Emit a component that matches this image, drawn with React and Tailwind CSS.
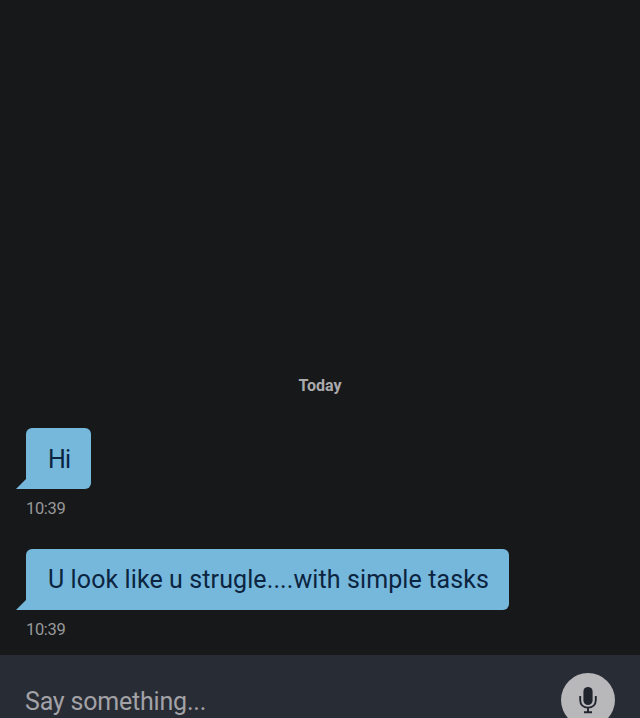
const messages = [
    { id: 1, text: 'Hi', time: '10:39', width: 'w-[65px]', tracking: 'tracking-[-0.8px]' },
    { id: 2, text: 'U look like u strugle....with simple tasks', time: '10:39', width: 'w-[483px]', tracking: 'tracking-[0.1px]' },
];

function Message({ message }) {
    return (
        <div className="h-[120.5px]">
            <div className={`relative flex h-[61px] items-center rounded-md rounded-bl-none bg-[#76b7dc] pl-[22px] ${message.width}`}>
                <svg className="absolute -left-[10px] bottom-0" width="11" height="10" viewBox="0 0 11 10">
                    <path d="M11 0H10L0 10H11Z" fill="#76b7dc" />
                </svg>
                <span className={`whitespace-nowrap pt-px text-[25px] leading-none text-[#0b2440] ${message.tracking}`}>{message.text}</span>
            </div>
            <div className="mt-[10px] text-[16.5px] leading-5 tracking-[-0.35px] text-[#98989b]">{message.time}</div>
        </div>
    );
}

function MicIcon() {
    return (
        <svg width="18" height="28" viewBox="0 0 18 28" fill="none" stroke="#20252d" strokeWidth="1.9">
            <rect x="4.4" y="1" width="9.2" height="18" rx="4.6" fill="#20252d" stroke="none" />
            <path d="M1.2 10V14C1.2 18.7 4.5 21.6 9 21.6S16.8 18.7 16.8 14V10" />
            <path d="M9 22V26M5 26.2H13" />
        </svg>
    );
}

export default function App() {
    return (
        <div className="flex h-[718px] w-[640px] flex-col overflow-hidden bg-[#17181a] font-['Roboto',sans-serif]">
            <div className="h-[655px] shrink-0 px-[26px] pt-[376px]">
                <div className="h-[52px] text-center text-[16px] font-bold leading-5 text-[#aaaaad]">Today</div>
                {messages.map((message) => (
                    <Message key={message.id} message={message} />
                ))}
            </div>
            <div className="flex h-[63px] shrink-0 items-start justify-between bg-[#282c34] pl-[25px] pr-[25px]">
                <span className="pt-[32px] text-[25px] leading-[30px] tracking-[-0.2px] text-[#a3a2a7]">Say something...</span>
                <div className="mt-[18px] flex h-[54px] w-[54px] shrink-0 items-center justify-center rounded-full bg-[#b8b8bb]">
                    <MicIcon />
                </div>
            </div>
        </div>
    );
}
